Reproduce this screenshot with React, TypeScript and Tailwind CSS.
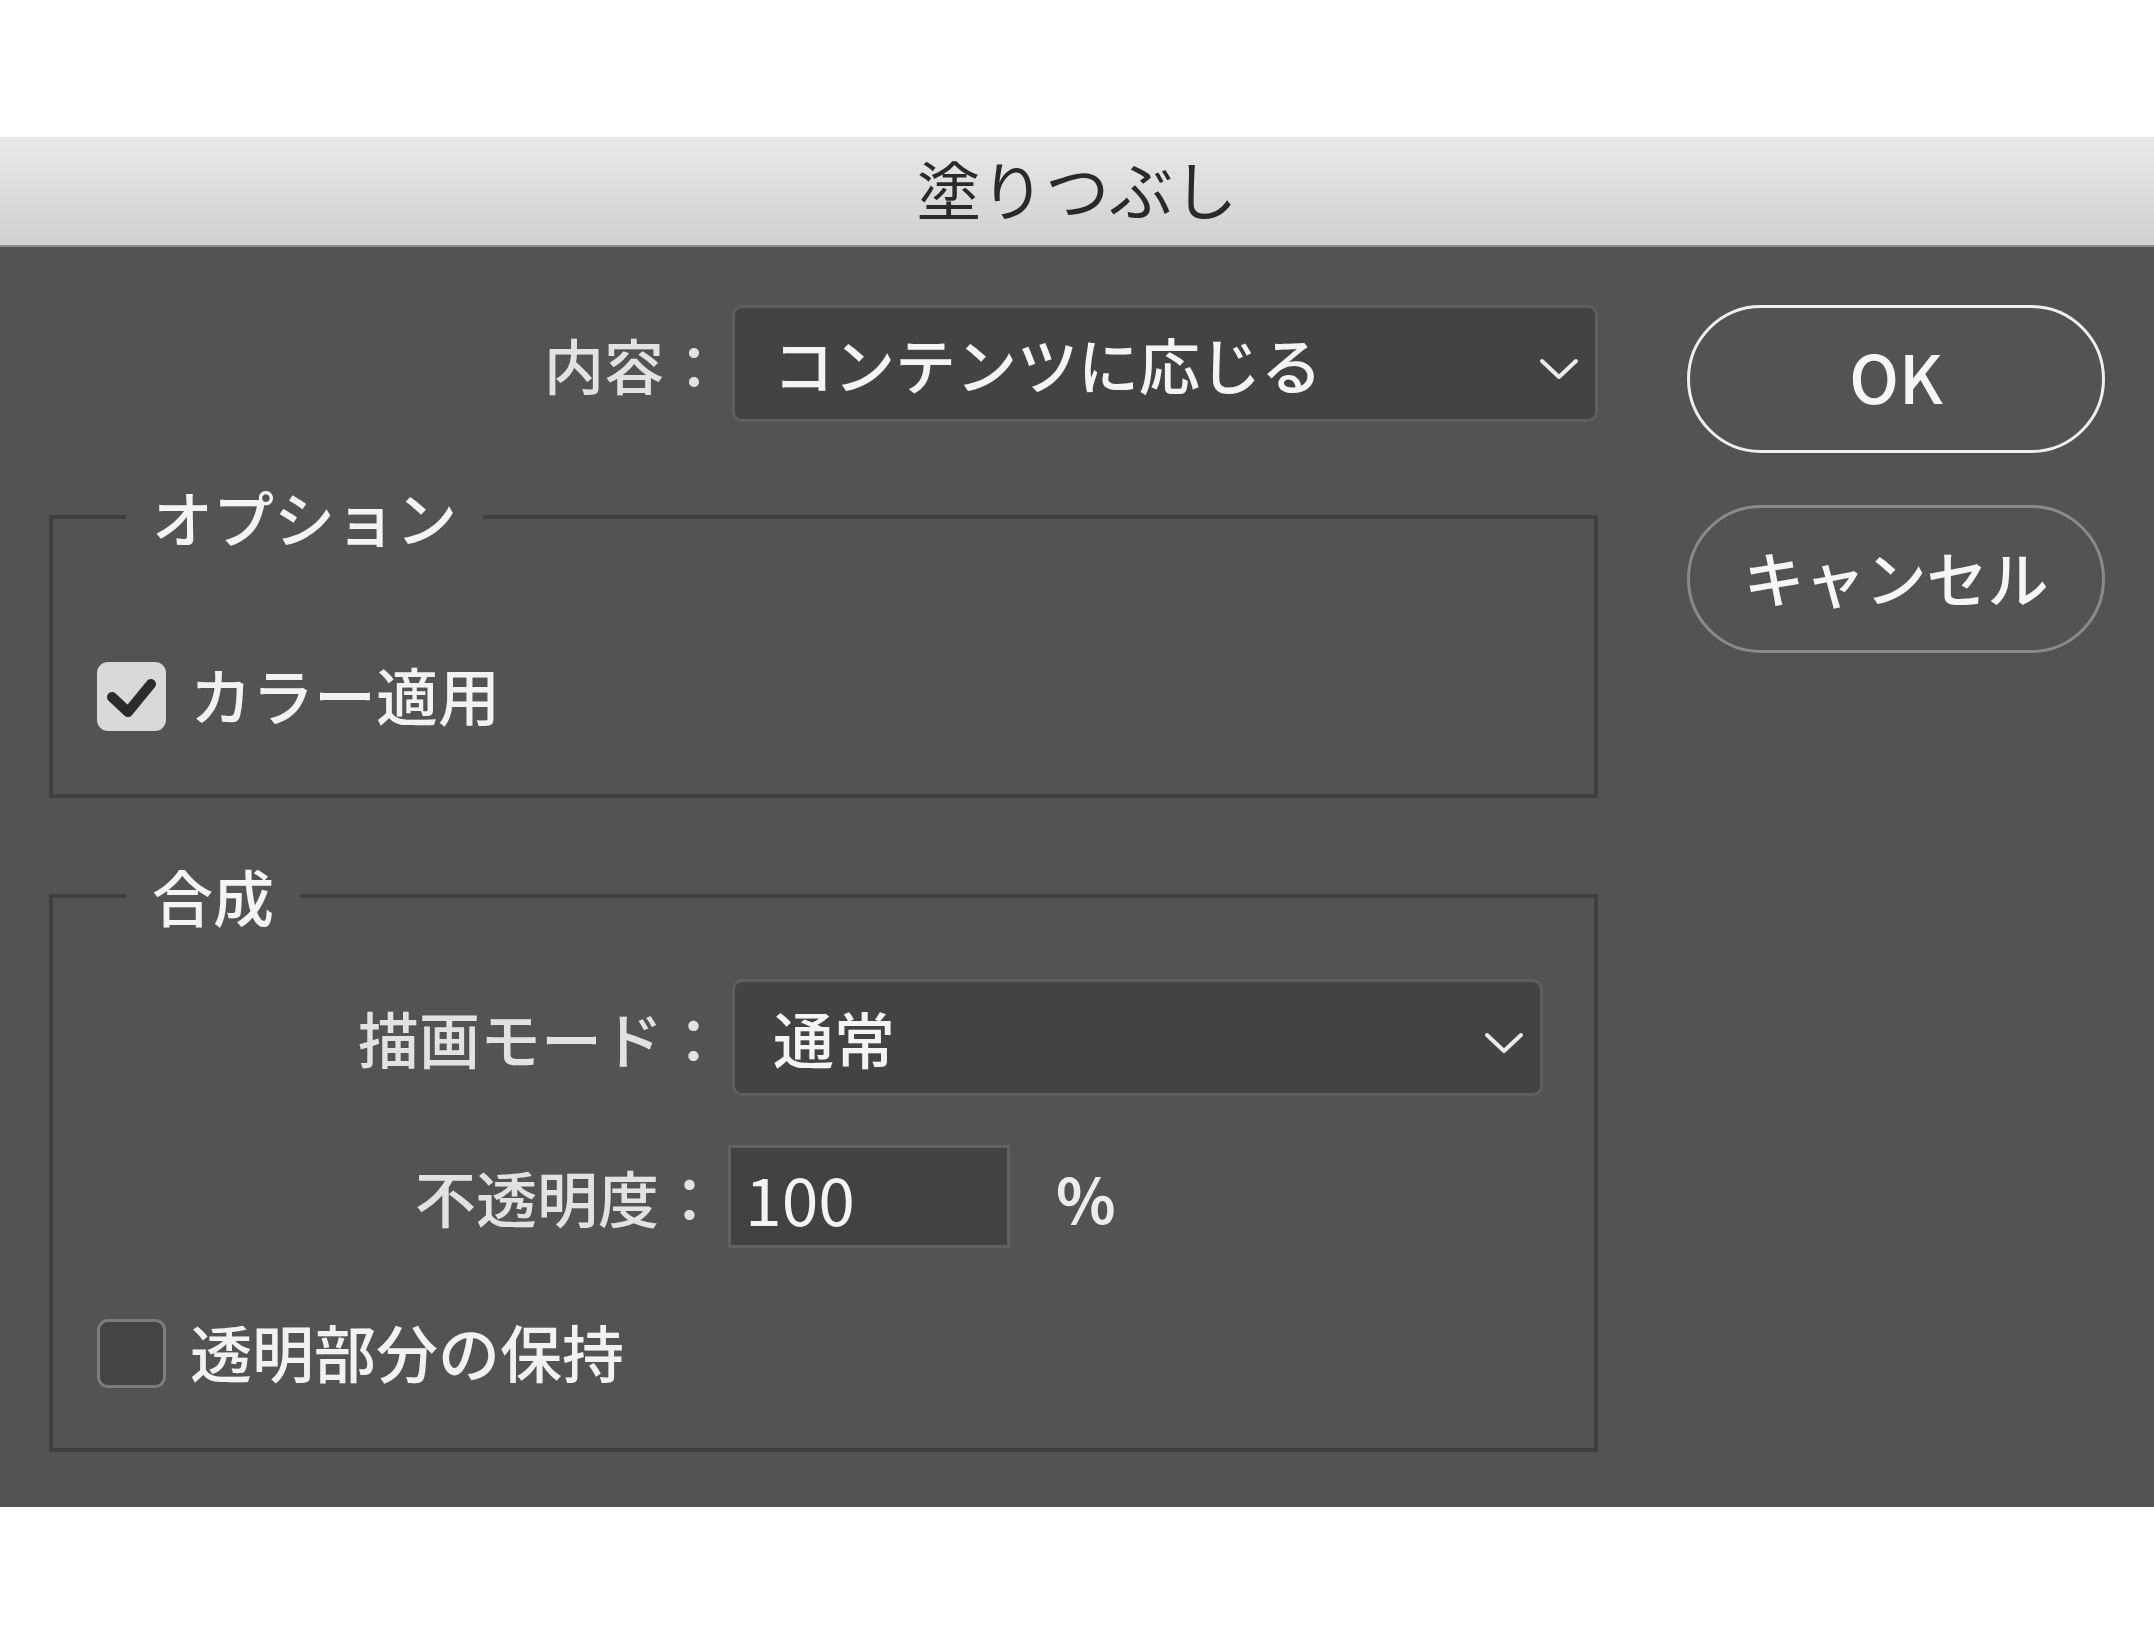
import React from 'react'

const jp = "font-['Noto_Sans_CJK_JP','Noto_Sans',sans-serif]"

function Chevron() {
  return (
    <svg width="40" height="24" viewBox="0 0 40 24" className="shrink-0 mt-[10px]">
      <path d="M3 4 L20 20 L37 4" fill="none" stroke="#ececec" strokeWidth="4" strokeLinecap="round" strokeLinejoin="round" />
    </svg>
  )
}

function Select({ value, width }: { value: string; width: string }) {
  return (
    <div
      className={`${width} h-[117px] rounded-[10px] border-[3px] border-[#5f5f5f] bg-[#434343] flex items-center justify-between pl-[38px] pr-[16px]`}
    >
      <span className="text-[61px] leading-none font-medium text-[#f4f4f4]">{value}</span>
      <Chevron />
    </div>
  )
}

function Checkbox({ checked, label }: { checked: boolean; label: string }) {
  return (
    <div className="flex items-center gap-[24px]">
      {checked ? (
        <div className="w-[69px] h-[69px] rounded-[11px] bg-[#d9d9d9] flex items-center justify-center">
          <svg width="69" height="69" viewBox="0 0 69 69">
            <path d="M15 35 L31 50 L54 22" fill="none" stroke="#2b2b2b" strokeWidth="10" strokeLinecap="round" strokeLinejoin="round" />
          </svg>
        </div>
      ) : (
        <div className="w-[69px] h-[69px] rounded-[11px] bg-[#444444] border-[3px] border-[#7c7c7c]" />
      )}
      <span className="text-[62px] leading-none font-medium text-[#f2f2f2] pb-[6px]">{label}</span>
    </div>
  )
}

function Legend({ children }: { children: React.ReactNode }) {
  return (
    <legend className="ml-[29px] px-[26px] text-[61px] leading-[72px] font-medium text-[#f4f4f4]">{children}</legend>
  )
}

export default function App() {
  return (
    <div className={`w-[2154px] h-[1644px] bg-white flex flex-col ${jp}`}>
      <div className="h-[137px]" />

      {/* title bar */}
      <div className="h-[110px] bg-gradient-to-b from-[#e9e9e9] to-[#d0d0d0] border-b-2 border-[#8c8c8c] flex items-center justify-center">
        <span className="text-[64px] leading-none text-[#2a2a2a] pb-[8px]">塗りつぶし</span>
      </div>

      {/* body */}
      <div className="h-[1260px] bg-[#535353] flex">
        <div className="w-[1598px] pl-[49px] pt-[58px] flex flex-col">
          <div className="flex items-center">
            <div className="w-[683px] pr-[8px] text-right text-[60px] leading-none font-medium text-[#e2e2e2]">内容：</div>
            <Select value="コンテンツに応じる" width="w-[866px]" />
          </div>

          <fieldset className="mt-[59px] w-[1549px] border-4 border-[#3f3f3f] px-[44px] pb-[63px]">
            <Legend>オプション</Legend>
            <div className="mt-[109px]">
              <Checkbox checked label="カラー適用" />
            </div>
          </fieldset>

          <fieldset className="mt-[62px] w-[1549px] border-4 border-[#3f3f3f] px-[44px] pb-[60px]">
            <Legend>合成</Legend>
            <div className="mt-[47px] flex items-center">
              <div className="w-[635px] pr-[8px] text-right text-[61px] leading-none font-medium text-[#e2e2e2]">描画モード：</div>
              <Select value="通常" width="w-[811px]" />
            </div>
            <div className="mt-[49px] flex items-center">
              <div className="w-[631px] pr-[8px] text-right text-[61px] leading-none font-medium text-[#e2e2e2]">不透明度：</div>
              <div className="w-[282px] h-[103px] border-[3px] border-[#616161] bg-[#424242] flex items-center pl-[14px]">
                <span className="text-[66px] leading-none text-[#f4f4f4]">100</span>
              </div>
              <span className="ml-[46px] text-[62px] leading-none font-bold text-[#ececec]">%</span>
            </div>
            <div className="mt-[71px]">
              <Checkbox checked={false} label="透明部分の保持" />
            </div>
          </fieldset>
        </div>

        <div className="pl-[89px] pt-[58px] flex flex-col gap-[52px]">
          <button className="w-[418px] h-[148px] rounded-full border-[3px] border-[#efefef] flex items-center justify-center">
            <span className="text-[66px] leading-none font-medium text-[#f6f6f6] pb-[8px]">OK</span>
          </button>
          <button className="w-[418px] h-[148px] rounded-full border-[3px] border-[#8a8a8a] flex items-center justify-center">
            <span className="text-[61px] leading-none font-medium text-[#f6f6f6] pb-[6px]">キャンセル</span>
          </button>
        </div>
      </div>

      <div className="flex-1" />
    </div>
  )
}
